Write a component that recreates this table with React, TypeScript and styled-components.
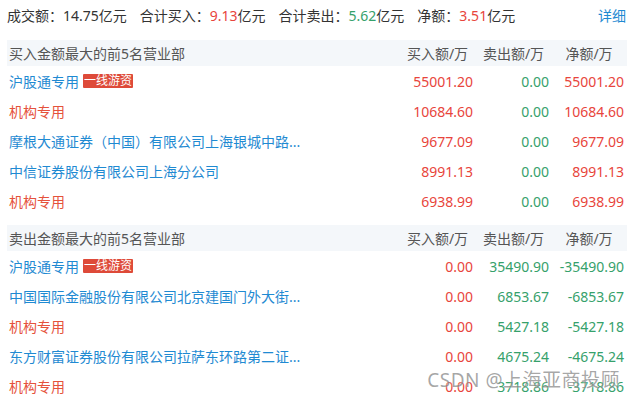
import React from "react";
import styled, { createGlobalStyle } from "styled-components";

const Global = createGlobalStyle`
  html, body { margin: 0; padding: 0; background: #fff; }
  body { font-family: "Noto Sans", "Noto Sans CJK SC", sans-serif; }
`;

const RED = "#e8453c";
const GREEN = "#36a16b";
const BLUE = "#1f8ad2";

const Page = styled.div`
  position: relative;
  width: 634px;
  height: 400px;
  overflow: hidden;
  padding: 0 7px;
  box-sizing: border-box;
  font-size: 14px;
`;

const Summary = styled.div`
  height: 30px;
  display: flex;
  align-items: center;
  color: #333;
  white-space: nowrap;
`;

const Stat = styled.span`
  margin-right: 13px;
`;

const Val = styled.span<{ $c: string }>`
  color: ${(p) => p.$c};
`;

const Detail = styled.span`
  margin-left: auto;
  margin-right: 1px;
  color: ${BLUE};
`;

const Section = styled.div<{ $gap: number }>`
  margin-top: ${(p) => p.$gap}px;
`;

const Grid = styled.div`
  display: grid;
  grid-template-columns: 1fr 76px 76px 75px;
  padding: 0 3px 0 2px;
  align-items: center;
  white-space: nowrap;
`;

const Head = styled(Grid)`
  height: 26px;
  background: #f4f7fa;
  color: #555;
`;

const HeadCell = styled.span`
  text-align: center;
  padding-left: 5px;
`;

const Row = styled(Grid)`
  height: 30px;
`;

const Name = styled.span<{ $c: string }>`
  color: ${(p) => p.$c};
  display: flex;
  align-items: center;
`;

const Tag = styled.span`
  margin-left: 4px;
  background: #de4a39;
  color: #fff;
  font-size: 12px;
  line-height: 14px;
  height: 14px;
  padding: 0 1px;
  border-radius: 1px;
`;

const Num = styled.span<{ $c: string }>`
  text-align: right;
  color: ${(p) => p.$c};
`;

const Watermark = styled.div`
  position: absolute;
  right: 14px;
  bottom: 7px;
  font-size: 19px;
  color: rgba(90, 90, 90, 0.55);
  text-shadow: 0 0 2px rgba(255, 255, 255, 0.8);
  white-space: nowrap;
  letter-spacing: 0.5px;
`;

type R = { name: string; kind: "hgt" | "org" | "firm"; buy: string; sell: string; net: string };

const buyRows: R[] = [
  { name: "沪股通专用", kind: "hgt", buy: "55001.20", sell: "0.00", net: "55001.20" },
  { name: "机构专用", kind: "org", buy: "10684.60", sell: "0.00", net: "10684.60" },
  { name: "摩根大通证券（中国）有限公司上海银城中路...", kind: "firm", buy: "9677.09", sell: "0.00", net: "9677.09" },
  { name: "中信证券股份有限公司上海分公司", kind: "firm", buy: "8991.13", sell: "0.00", net: "8991.13" },
  { name: "机构专用", kind: "org", buy: "6938.99", sell: "0.00", net: "6938.99" },
];

const sellRows: R[] = [
  { name: "沪股通专用", kind: "hgt", buy: "0.00", sell: "35490.90", net: "-35490.90" },
  { name: "中国国际金融股份有限公司北京建国门外大街...", kind: "firm", buy: "0.00", sell: "6853.67", net: "-6853.67" },
  { name: "机构专用", kind: "org", buy: "0.00", sell: "5427.18", net: "-5427.18" },
  { name: "东方财富证券股份有限公司拉萨东环路第二证...", kind: "firm", buy: "0.00", sell: "4675.24", net: "-4675.24" },
  { name: "机构专用", kind: "org", buy: "0.00", sell: "3718.86", net: "-3718.86" },
];

const netColor = (v: string) => (v.startsWith("-") ? GREEN : RED);

function Table({ title, rows, gap }: { title: string; rows: R[]; gap: number }) {
  return (
    <Section $gap={gap}>
      <Head>
        <span>{title}</span>
        <HeadCell>买入额/万</HeadCell>
        <HeadCell>卖出额/万</HeadCell>
        <HeadCell>净额/万</HeadCell>
      </Head>
      {rows.map((r, i) => (
        <Row key={i}>
          <Name $c={r.kind === "org" ? "#e5523c" : BLUE}>
            {r.name}
            {r.kind === "hgt" && <Tag>一线游资</Tag>}
          </Name>
          <Num $c={RED}>{r.buy}</Num>
          <Num $c={GREEN}>{r.sell}</Num>
          <Num $c={netColor(r.net)}>{r.net}</Num>
        </Row>
      ))}
    </Section>
  );
}

export default function App() {
  return (
    <>
      <Global />
      <Page>
        <Summary>
          <Stat>成交额：14.75亿元</Stat>
          <Stat>
            合计买入：<Val $c={RED}>9.13</Val>亿元
          </Stat>
          <Stat>
            合计卖出：<Val $c={GREEN}>5.62</Val>亿元
          </Stat>
          <Stat>
            净额：<Val $c={RED}>3.51</Val>亿元
          </Stat>
          <Detail>详细</Detail>
        </Summary>
        <Table title="买入金额最大的前5名营业部" rows={buyRows} gap={10} />
        <Table title="卖出金额最大的前5名营业部" rows={sellRows} gap={9} />
        <Watermark>CSDN @上海亚商投顾</Watermark>
      </Page>
    </>
  );
}
